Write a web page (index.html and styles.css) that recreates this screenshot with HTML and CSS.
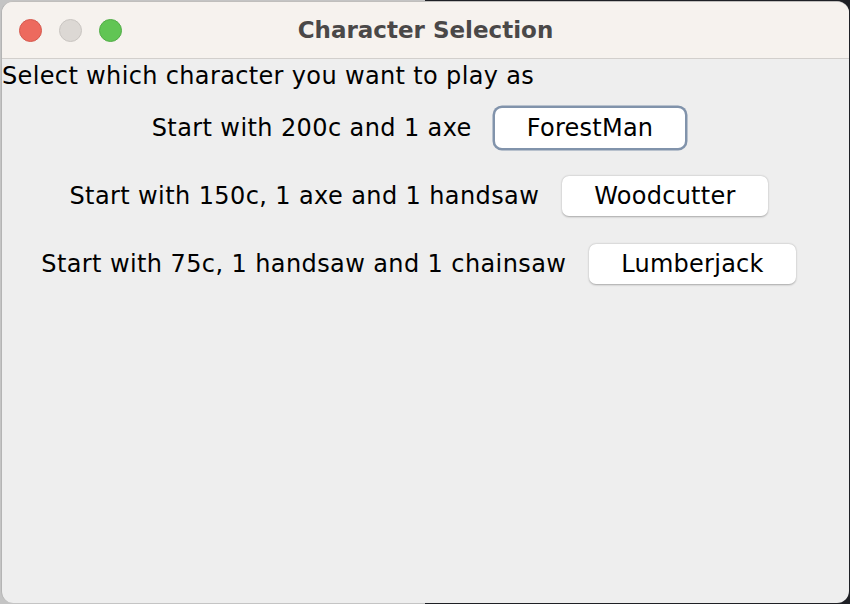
FILE: index.html
```html
<!DOCTYPE html>
<html>
<head>
<meta charset="utf-8">
<link rel="stylesheet" href="styles.css">
</head>
<body>
<div class="window">
  <div class="titlebar">
    <div class="lights">
      <span class="light red"></span>
      <span class="light gray"></span>
      <span class="light green"></span>
    </div>
    <div class="title">Character Selection</div>
  </div>
  <div class="content">
    <div class="prompt">Select which character you want to play as</div>
    <div class="row">
      <span class="label">Start with 200c and 1 axe</span>
      <button class="btn focused">ForestMan</button>
    </div>
    <div class="row">
      <span class="label">Start with 150c, 1 axe and 1 handsaw</span>
      <button class="btn">Woodcutter</button>
    </div>
    <div class="row">
      <span class="label">Start with 75c, 1 handsaw and 1 chainsaw</span>
      <button class="btn">Lumberjack</button>
    </div>
  </div>
</div>
</body>
</html>
```

FILE: styles.css
```css
html, body {
  margin: 0;
  padding: 0;
  width: 850px;
  height: 604px;
  overflow: hidden;
}
body {
  background: linear-gradient(to right, #c4c4c4 0, #c4c4c4 50%, #1e2025 50%, #1e2025 100%);
  font-family: "DejaVu Sans", "Liberation Sans", sans-serif;
  color: #000;
}
.window {
  box-sizing: border-box;
  margin: 1px;
  width: 848px;
  height: 602px;
  border-radius: 12px;
  border-left: 1px solid #b4b4b4;
  border-top: 1px solid #c0bebc;
  overflow: hidden;
  background: #eeeeee;
  display: flex;
  flex-direction: column;
}
.titlebar {
  height: 56px;
  flex: none;
  background: #f6f2ee;
  border-bottom: 1px solid #d2cfcc;
  position: relative;
  display: flex;
  align-items: center;
  justify-content: center;
}
.lights {
  position: absolute;
  left: 17px;
  top: 17px;
  display: flex;
  gap: 17px;
}
.light {
  width: 23px;
  height: 23px;
  border-radius: 50%;
  box-sizing: border-box;
}
.red { background: #ed6a5e; border: 1px solid #d65a4f; }
.gray { background: #dcd8d4; border: 1px solid #c9c5c1; }
.green { background: #61c554; border: 1px solid #52ad47; }
.title {
  font-weight: bold;
  font-size: 23px;
  color: #4a4848;
}
.content {
  display: flex;
  flex-direction: column;
  padding-top: 2px;
}
.prompt {
  font-size: 24px;
  letter-spacing: 0.35px;
  line-height: 30px;
  padding-left: 0;
  white-space: nowrap;
}
.row {
  display: flex;
  align-items: center;
  justify-content: center;
  gap: 23px;
  height: 41px;
  margin-top: 27px;
  padding-right: 14px;
  white-space: nowrap;
}
.prompt + .row { margin-top: 16px; }
.label {
  font-size: 24px;
  letter-spacing: 0.4px;
}
.btn {
  font-family: inherit;
  font-size: 24px;
  letter-spacing: 0.25px;
  background: #ffffff;
  border: none;
  border-radius: 7px;
  height: 40px;
  padding: 0 32px;
  box-shadow: 0 0.5px 2px rgba(0,0,0,0.3);
  color: #000;
}
.btn.focused {
  box-shadow: 0 0 0 2.5px #8193ab;
}
```
